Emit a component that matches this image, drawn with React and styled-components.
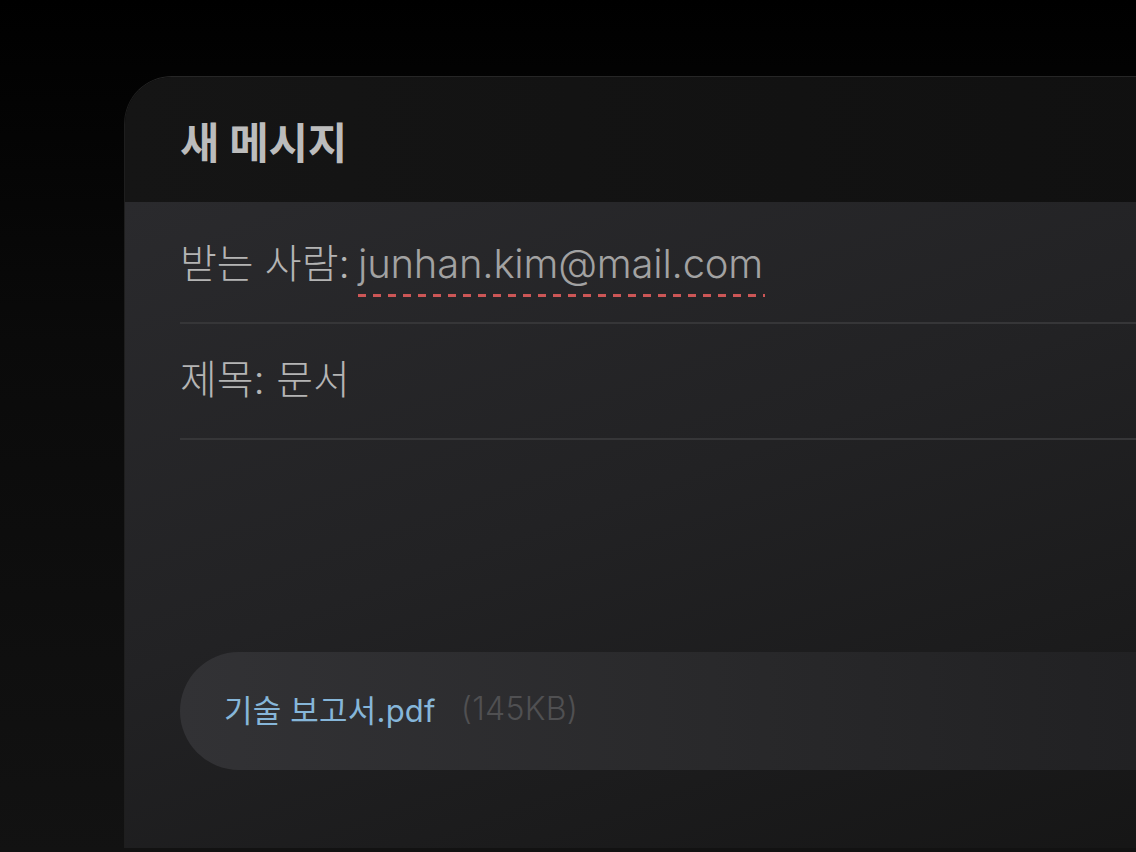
import React from 'react'
import styled, { createGlobalStyle } from 'styled-components'

const GlobalStyle = createGlobalStyle`
  html, body {
    margin: 0;
    padding: 0;
    height: 100%;
  }
  body {
    background: linear-gradient(180deg, #000 0%, #0a0a0a 40%, #121212 100%);
    font-family: Inter, "Noto Sans CJK KR", "Noto Sans", sans-serif;
    overflow: hidden;
  }
`

const Page = styled.div`
  width: 1136px;
  height: 852px;
  padding: 76px 0 0 124px;
  box-sizing: border-box;
  overflow: hidden;
`

const Card = styled.div`
  width: 1120px;
  height: 772px;
  border-top-left-radius: 48px;
  overflow: hidden;
  display: flex;
  flex-direction: column;
  border-top: 1px solid #262626;
  border-left: 1px solid #1e1e1e;
  box-sizing: border-box;
`

const Header = styled.div`
  height: 125px;
  flex-shrink: 0;
  display: flex;
  align-items: center;
  padding-left: 55px;
  background: linear-gradient(90deg, #151515 0%, #101010 100%);
`

const Title = styled.h1`
  margin: 0;
  font-size: 43px;
  font-weight: 700;
  letter-spacing: -0.3px;
  color: #bcbcbc;
`

const Body = styled.div`
  flex: 1;
  padding: 6px 0 0 55px;
  background: linear-gradient(160deg, #2a2a2d 0%, #222224 45%, #151515 100%);
`

const Field = styled.div`
  padding: 32px 0 34px;
  line-height: 48px;
  font-size: 40px;
  font-weight: 300;
  color: #b4b4b4;
  border-bottom: 2px solid #363638;
  white-space: nowrap;
`

const Address = styled.span`
  position: relative;
  margin-left: -3px;
  color: #a2a2a2;
  letter-spacing: -0.2px;

  &::after {
    content: '';
    position: absolute;
    left: 0;
    right: -2px;
    bottom: -9px;
    height: 3px;
    background: repeating-linear-gradient(90deg, #cc5656 0 8px, transparent 8px 15px);
  }
`

const Attachment = styled.div`
  margin-top: 212px;
  height: 118px;
  border-radius: 59px 0 0 59px;
  display: flex;
  align-items: center;
  gap: 25px;
  padding: 0 0 5px 44px;
  box-sizing: border-box;
  background: linear-gradient(90deg, #323235 0%, #29292b 50%, #1f1f21 100%);
`

const FileName = styled.span`
  font-size: 31px;
  letter-spacing: 0.2px;
  color: #86b6d9;
`

const FileSize = styled.span`
  font-size: 32px;
  font-weight: 300;
  letter-spacing: 0.3px;
  color: #505052;
`

export default function App() {
  return (
    <>
      <GlobalStyle />
      <Page>
        <Card>
          <Header>
            <Title>새 메시지</Title>
          </Header>
          <Body>
            <Field>
              받는 사람: <Address>junhan.kim@mail.com</Address>
            </Field>
            <Field>제목: 문서</Field>
            <Attachment>
              <FileName>기술 보고서.pdf</FileName>
              <FileSize>(145KB)</FileSize>
            </Attachment>
          </Body>
        </Card>
      </Page>
    </>
  )
}
